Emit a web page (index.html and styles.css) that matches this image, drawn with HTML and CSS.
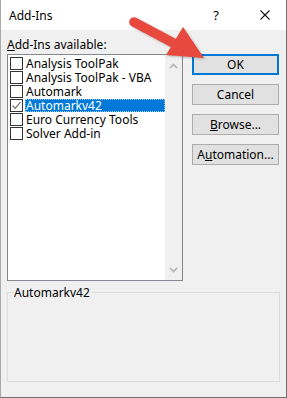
FILE: index.html
```html
<!DOCTYPE html>
<html lang="en">
<head>
  <meta charset="UTF-8">
  <title>Add-Ins</title>
  <link rel="stylesheet" href="styles.css">
</head>
<body>
  <div class="window">
    <div class="titlebar">
      <span class="title">Add-Ins</span>
      <span class="help">?</span>
      <svg class="close" width="10" height="10" viewBox="0 0 10 10">
        <path d="M0.5 0.5 L9.5 9.5 M9.5 0.5 L0.5 9.5" stroke="#111" stroke-width="1.1" fill="none"/>
      </svg>
    </div>

    <div class="content">
      <div class="label"><u>A</u>dd-Ins available:</div>
      <div class="main-row">
        <div class="listbox">
          <ul class="items">
            <li><span class="check"></span><span class="name">Analysis ToolPak</span></li>
            <li><span class="check"></span><span class="name">Analysis ToolPak - VBA</span></li>
            <li><span class="check"></span><span class="name">Automark</span></li>
            <li class="selected">
              <span class="check">
                <svg width="11" height="11" viewBox="0 0 11 11"><path d="M1.5 5.5 L4.2 8.3 L9.5 2.2" stroke="#6d6d6d" stroke-width="1.2" fill="none"/></svg>
              </span>
              <span class="name">Automarkv42</span>
            </li>
            <li><span class="check"></span><span class="name">Euro Currency Tools</span></li>
            <li><span class="check"></span><span class="name">Solver Add-in</span></li>
          </ul>
          <div class="scrollbar">
            <svg width="9" height="6" viewBox="0 0 9 6"><path d="M1 5 L4.5 1.5 L8 5" stroke="#b4b4b4" stroke-width="1.6" fill="none"/></svg>
            <svg width="9" height="6" viewBox="0 0 9 6"><path d="M1 1 L4.5 4.5 L8 1" stroke="#b4b4b4" stroke-width="1.6" fill="none"/></svg>
          </div>
        </div>

        <div class="buttons">
          <button class="btn default">OK</button>
          <button class="btn">Cancel</button>
          <button class="btn"><u>B</u>rowse...</button>
          <button class="btn">A<u>u</u>tomation...</button>
        </div>
      </div>

      <fieldset class="groupbox">
        <legend>Automarkv42</legend>
      </fieldset>
    </div>

    <!-- red callout arrow -->
    <svg class="arrow" width="287" height="398" viewBox="0 0 287 398">
      <line x1="133" y1="22" x2="178" y2="46" stroke="#e8493f" stroke-width="9.5" stroke-linecap="round"/>
      <polygon points="182,27 165,55 203,58" fill="#e8493f"/>
    </svg>
  </div>
</body>
</html>
```

FILE: styles.css
```css
body {
  margin: 0;
  font-family: "Noto Sans", sans-serif;
  font-size: 12px;
  color: #000;
}
.window {
  position: relative;
  width: 287px;
  height: 398px;
  box-sizing: border-box;
  background: #f0f0f0;
  border-left: 1px solid #a9a9a9;
  border-right: 1px solid #6f6f6f;
  border-bottom: 1px solid #6f6f6f;
  overflow: hidden;
}
.titlebar {
  height: 30px;
  background: #fff;
  display: flex;
  align-items: center;
  padding-left: 8px;
}
.title {
  flex: 1;
  font-size: 12px;
}
.help {
  margin-right: 41px;
  font-size: 13px;
}
.close {
  margin-right: 16px;
}
.content {
  padding: 7px 0 0 6px;
}
.label {
  height: 17px;
  line-height: 15px;
}
.main-row {
  display: flex;
  gap: 9px;
}
.listbox {
  width: 176px;
  height: 227px;
  box-sizing: border-box;
  border: 1px solid #828790;
  background: #fff;
  display: flex;
}
.items {
  list-style: none;
  margin: 0;
  padding: 1px 0 0 2px;
  flex: 1;
}
.items li {
  height: 14px;
  display: flex;
  align-items: center;
}
.check {
  width: 13px;
  height: 13px;
  box-sizing: border-box;
  border: 1px solid #333;
  background: #fff;
  display: flex;
  align-items: center;
  justify-content: center;
}
.name {
  margin-left: 2px;
  padding: 0 1px;
  height: 13px;
  line-height: 13px;
  font-size: 12px;
  white-space: nowrap;
  overflow: visible;
}
.selected .name {
  flex: 1;
  background: #0078d7;
  color: #fff;
  outline: 1px dotted #9fc8ee;
  outline-offset: -1px;
}
.scrollbar {
  width: 17px;
  background: #f0f0f0;
  display: flex;
  flex-direction: column;
  justify-content: space-between;
  align-items: center;
  padding: 8px 0 7px;
}
.buttons {
  display: flex;
  flex-direction: column;
  gap: 9px;
}
.btn {
  width: 87px;
  height: 21px;
  box-sizing: border-box;
  border: 1px solid #adadad;
  background: #e1e1e1;
  font-family: "Noto Sans", sans-serif;
  font-size: 12px;
  padding: 0;
  color: #000;
}
.btn.default {
  border: 2px solid #0078d7;
}
.groupbox {
  margin: 5px 0 0 0;
  width: 273px;
  height: 96px;
  box-sizing: border-box;
  border: 1px solid #dcdcdc;
  padding: 0;
}
.groupbox legend {
  margin-left: 5px;
  padding: 0 1px;
  line-height: 13px;
}
.arrow {
  position: absolute;
  left: 0;
  top: 0;
  pointer-events: none;
  filter: drop-shadow(1px 1px 1px rgba(0,0,0,0.25));
}
```
